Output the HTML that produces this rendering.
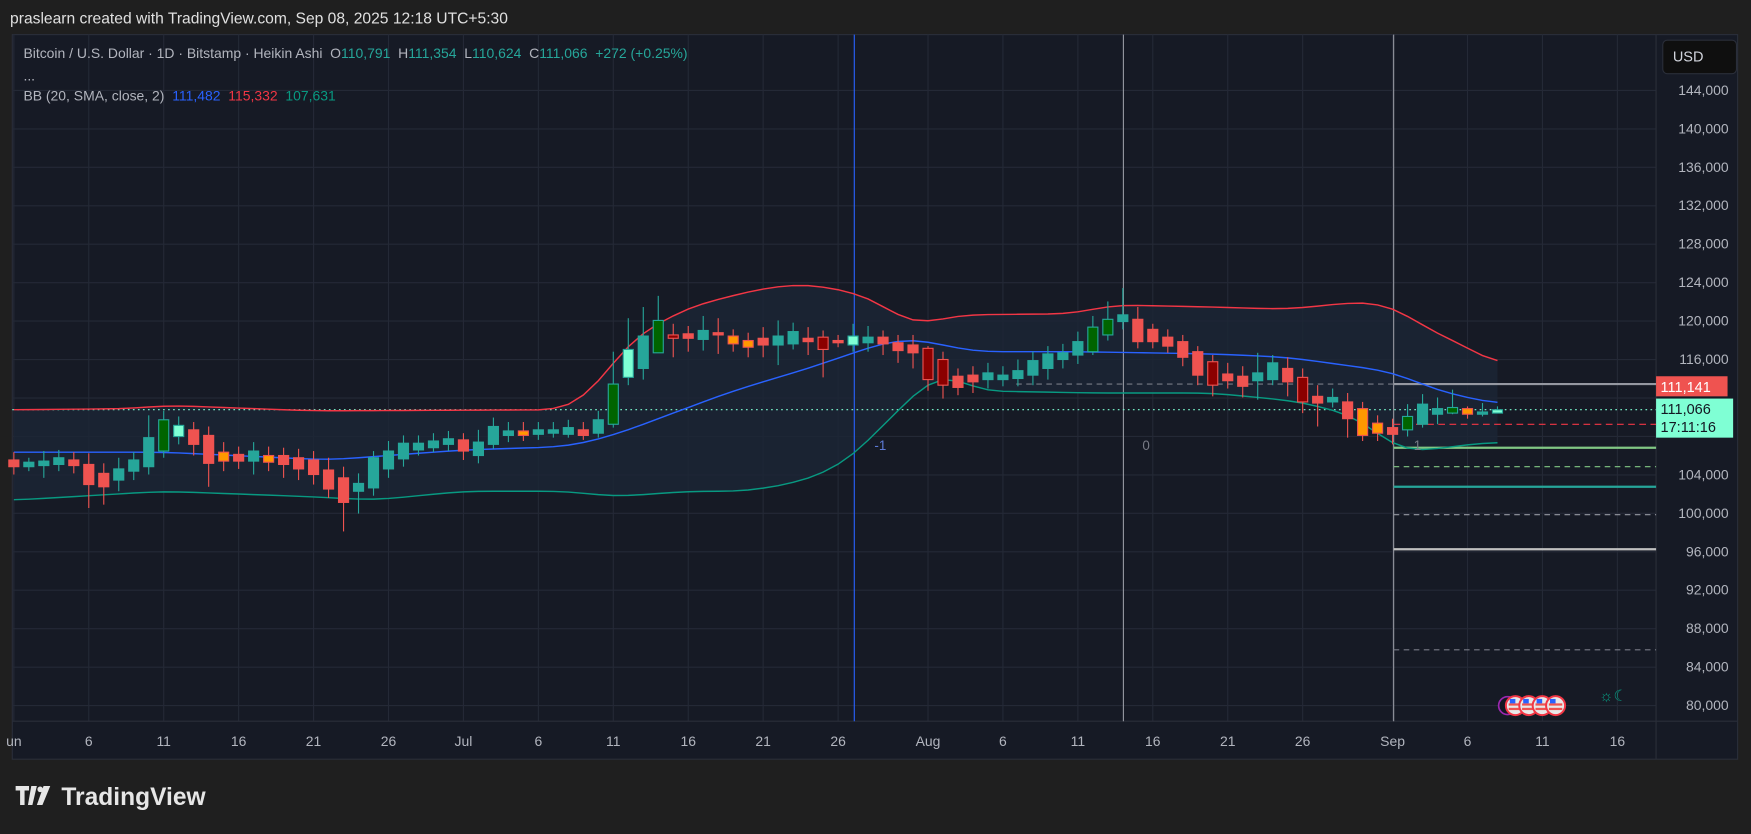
<!DOCTYPE html>
<html><head><meta charset="utf-8"><style>
html,body{margin:0;padding:0;background:#1f1f1f;width:1751px;height:834px;overflow:hidden}
svg{display:block}
text{font-family:"Liberation Sans",sans-serif;white-space:pre}
</style></head><body>
<svg id="s" width="1751" height="834" viewBox="0 0 1568 747" preserveAspectRatio="none" xmlns="http://www.w3.org/2000/svg">
<rect x="0" y="0" width="1568" height="747" fill="#1f1f1f"/>
<text x="9" y="21" fill="#e0e0e0" font-size="14">praslearn created with TradingView.com, Sep 08, 2025 12:18 UTC+5:30</text>
<rect x="11" y="31" width="1545" height="649" fill="#161a25" stroke="#2a2e39"/>
<g id="grid" stroke="#242936" stroke-width="1"></g>
<line x1="1483" y1="31" x2="1483" y2="680" stroke="#2a2e39"/>
<line x1="11" y1="646" x2="1556" y2="646" stroke="#2a2e39"/>
<g id="chart"></g>
<text x="21" y="52" fill="#b2b5be" font-size="12.5" xml:space="preserve">Bitcoin / U.S. Dollar · 1D · Bitstamp · Heikin Ashi  O<tspan fill="#26a69a">110,791</tspan>  H<tspan fill="#26a69a">111,354</tspan>  L<tspan fill="#26a69a">110,624</tspan>  C<tspan fill="#26a69a">111,066  +272 (+0.25%)</tspan></text>
<text x="21" y="72" fill="#b2b5be" font-size="12.5">...</text>
<text x="21" y="90" fill="#b2b5be" font-size="12.5" xml:space="preserve">BB (20, SMA, close, 2)  <tspan fill="#2962ff">111,482</tspan>  <tspan fill="#f23645">115,332</tspan>  <tspan fill="#089981">107,631</tspan></text>
<rect x="1489" y="36" width="66" height="30" rx="4" fill="#0f0f0f" stroke="#2a2e39"/>
<text x="1498" y="55" fill="#d1d4dc" font-size="13">USD</text>
<g id="axis" fill="#b2b5be" font-size="12.5"></g>
<rect x="1483" y="337" width="64" height="18" fill="#ef5350"/>
<text x="1487" y="351" fill="#fff" font-size="13">111,141</text>
<rect x="1483" y="357" width="69" height="35" fill="#7fffd4"/>
<text x="1487" y="371" fill="#131722" font-size="13">111,066</text>
<text x="1487" y="387" fill="#131722" font-size="13">17:11:16</text>
<text x="783" y="403" fill="#5d7ad6" font-size="12">-1</text>
<text x="1023" y="403" fill="#787b86" font-size="12">0</text>
<text x="1266" y="403" fill="#787b86" font-size="12">1</text>
<g id="flags"></g>
<text x="1432" y="628" fill="#089981" font-size="14">☼☾</text>
<g fill="#e6e6e6">
<path d="M14 704h12v4h-4v13h-4v-13h-4z M28 704h5l-4 17h-4z" />
<circle cx="36" cy="707" r="2.5"/>
<path d="M39 704h6l-7 17h-5z"/>
</g>
<text x="55" y="721" fill="#e6e6e6" font-size="22" font-weight="bold">TradingView</text>
</svg>
<script>
const NS="http://www.w3.org/2000/svg";
function el(p,t,a,txt){const e=document.createElementNS(NS,t);for(const k in a)e.setAttribute(k,a[k]);if(txt!==undefined)e.textContent=txt;document.getElementById(p).appendChild(e);return e;}
const py=p=>81+(144000-p)*0.008609;
const dx=d=>12.4+13.42*d;
for(let p=80000;p<=144000;p+=4000){const y=py(p);el('grid','line',{x1:11,x2:1483,y1:y,y2:y});
 if(p!==108000&&p!==112000) el('axis','text',{x:1548,y:y+4,'text-anchor':'end'},p.toLocaleString('en-US'));}
const labs=[["un",0],["6",5],["11",10],["16",15],["21",20],["26",25],["Jul",30],["6",35],["11",40],["16",45],["21",50],["26",55],["Aug",61],["6",66],["11",71],["16",76],["21",81],["26",86],["Sep",92],["6",97],["11",102],["16",107]];
labs.forEach(([t,d])=>{const x=dx(d);el('grid','line',{x1:x,x2:x,y1:31,y2:646});el('axis','text',{x:x,y:668,'text-anchor':'middle'},t);});
function interp(pts){let out=[];for(let d=0;d<=99;d++){let i=0;while(i<pts.length-2&&pts[i+1][0]<d)i++;const[a,ya]=pts[i],[b,yb]=pts[i+1];let t=(d-a)/(b-a);out.push(ya+(yb-ya)*Math.max(0,Math.min(1,t)));}
 for(let k=0;k<2;k++){out=out.map((v,i)=>(out[Math.max(0,i-1)]+v+out[Math.min(99,i+1)])/3);}
 return out.map((v,i)=>[dx(i),v]);}
const up=interp([[0,367],[8,366],[10,363],[20,368],[37,367],[39,345],[41,305],[45,275],[50,258],[53,254],[57,265],[60,292],[63,282],[71,281],[73,273],[80,275],[85,277],[90,270],[92,274],[95,300],[97,310],[99,328]]);
const mid=interp([[0,405],[10,405],[21,412],[30,403],[37,400],[40,390],[44,370],[48,350],[53,330],[58,307],[60,303],[64,315],[71,315],[80,317],[85,320],[92,333],[95,350],[99,362]]);
const lo=interp([[0,448],[10,440],[20,445],[24,448],[30,440],[37,440],[40,445],[45,440],[49,440],[53,430],[56,410],[58,380],[60,355],[62,330],[64,350],[72,352],[80,352],[86,360],[90,375],[92,402],[94,404],[97,398],[99,396]]);
let poly=up.map(p=>p.join(',')).concat(lo.slice().reverse().map(p=>p.join(','))).join(' ');
el('chart','polygon',{points:poly,fill:'#1b2536',opacity:0.8});
const H=(y,x1,x2,c,da,w)=>el('chart','line',{x1:x1,x2:x2,y1:y,y2:y,stroke:c,'stroke-width':w||1,'stroke-dasharray':da||''});
el('chart','line',{x1:765,x2:765,y1:31,y2:646,stroke:'#2962ff','stroke-width':1});
el('chart','line',{x1:1006,x2:1006,y1:31,y2:646,stroke:'#9598a1','stroke-width':1});
el('chart','line',{x1:1248,x2:1248,y1:31,y2:646,stroke:'#9598a1','stroke-width':1});
H(344,910,1248,'#787b86','5,4');H(344,1248,1483,'#9598a1','',2);
H(380,1248,1483,'#f23645','6,4');H(401,1248,1483,'#81c784','',2);H(418,1248,1483,'#81c784','5,4');
H(436,1248,1483,'#26a69a','',2);H(461,1248,1483,'#9598a1','5,4');H(492,1248,1483,'#c0c0c0','',2);H(582,1248,1483,'#787b86','5,4');
H(367,11,1483,'#7fffd4','1.5,3');
const pl=(a,c)=>el('chart','polyline',{points:a.map(p=>p.join(',')).join(' '),fill:'none',stroke:c,'stroke-width':1.3});
pl(up,'#f23645');pl(mid,'#2962ff');pl(lo,'#089981');
const C=[[0,412,418,405,425,'r'],[1,414,418,410,422,'t'],[2,413,417,404,428,'t'],[3,410,416,403,422,'t'],[4,412,417,405,424,'r'],[5,416,434,406,455,'r'],[6,424,436,415,452,'r'],[7,420,430,410,440,'t'],[8,412,422,405,430,'t'],[9,392,418,372,425,'t'],[10,376,404,368,410,'g'],[11,381,391,373,398,'m'],[12,385,398,378,408,'r'],[13,390,415,382,436,'r'],[14,405,413,396,422,'o'],[15,407,413,400,420,'r'],[16,404,413,396,425,'t'],[17,408,414,400,422,'o'],[18,408,416,401,428,'r'],[19,410,420,402,430,'r'],[20,412,425,404,434,'r'],[21,421,438,410,446,'r'],[22,428,450,418,476,'r'],[23,433,440,424,460,'t'],[24,410,437,404,444,'t'],[25,404,420,395,428,'t'],[26,397,411,390,418,'t'],[27,397,403,390,408,'t'],[28,395,401,388,405,'t'],[29,393,398,386,404,'t'],[30,394,404,388,412,'r'],[31,396,408,385,415,'t'],[32,382,398,374,402,'t'],[33,386,390,378,396,'t'],[34,386,390,378,395,'o'],[35,385,389,378,394,'t'],[36,385,388,378,392,'t'],[37,383,389,376,392,'t'],[38,385,390,378,394,'r'],[39,376,388,368,392,'t'],[40,344,380,315,383,'g'],[41,313,338,285,345,'m'],[42,301,330,275,340,'t'],[43,287,316,265,316,'g'],[44,300,303,290,320,'d'],[45,299,303,292,315,'r'],[46,296,304,283,314,'t'],[47,298,300,285,317,'r'],[48,301,308,295,315,'o'],[49,305,311,298,320,'o'],[50,303,309,293,320,'r'],[51,301,309,287,327,'t'],[52,297,308,289,313,'t'],[53,303,306,293,318,'r'],[54,302,313,296,338,'d'],[55,305,307,300,311,'r'],[56,301,309,290,315,'m'],[57,302,307,292,315,'t'],[58,302,308,296,318,'r'],[59,307,314,300,325,'r'],[60,309,316,300,330,'r'],[61,312,340,310,350,'d'],[62,322,345,315,357,'d'],[63,337,347,330,354,'r'],[64,336,342,328,352,'r'],[65,334,340,325,348,'t'],[66,336,340,328,346,'t'],[67,332,339,322,346,'t'],[68,323,336,315,345,'t'],[69,317,330,310,340,'t'],[70,316,322,308,330,'t'],[71,306,318,297,326,'t'],[72,293,315,283,318,'g'],[73,286,300,270,305,'g'],[74,282,288,258,295,'t'],[75,286,306,275,312,'r'],[76,295,306,290,312,'r'],[77,302,310,295,316,'r'],[78,306,320,300,328,'r'],[79,315,336,310,345,'r'],[80,324,345,318,355,'d'],[81,335,341,325,348,'r'],[82,337,346,328,356,'r'],[83,334,341,316,358,'t'],[84,325,340,318,345,'t'],[85,330,342,320,355,'r'],[86,338,360,330,370,'d'],[87,355,361,345,382,'r'],[88,356,360,348,365,'t'],[89,360,375,352,392,'r'],[90,366,390,360,395,'o'],[91,379,388,372,395,'o'],[92,383,389,375,398,'r'],[93,373,385,362,391,'g'],[94,362,380,353,383,'t'],[95,366,371,356,380,'t'],[96,365,370,349,371,'g'],[97,366,371,364,375,'o'],[98,369,370,361,373,'t'],[99,367,370,364,370,'m']];
const col={t:['#26a69a','#26a69a'],g:['#006400','#26a69a'],m:['#7fffd4','#26a69a'],r:['#ef5350','#ef5350'],d:['#8b0000','#ef5350'],o:['#ff9800','#ef5350']};
C.forEach(([d,o,c,h,l,t])=>{const x=dx(d);const [f,s]=col[t];
 el('chart','line',{x1:x,x2:x,y1:h,y2:l,stroke:s,'stroke-width':1});
 const hh=Math.max(2,c-o);el('chart','rect',{x:x-4.5,y:o,width:9,height:hh,fill:f,stroke:s,'stroke-width':1});});
el('flags','circle',{cx:1350,cy:632,r:8,fill:'#131722',stroke:'#9c27b0','stroke-width':1.5});
[1357,1369,1381,1393].forEach(x=>{el('flags','circle',{cx:x,cy:632,r:8.5,fill:'#e8e8e8',stroke:'#f23645','stroke-width':1.8});
 el('flags','rect',{x:x-6,y:630,width:12,height:2,fill:'#ef5350'});el('flags','rect',{x:x-6,y:634,width:12,height:2,fill:'#ef5350'});
 el('flags','rect',{x:x-5,y:626,width:5,height:4,fill:'#2962ff'});});
</script>
</body></html>
